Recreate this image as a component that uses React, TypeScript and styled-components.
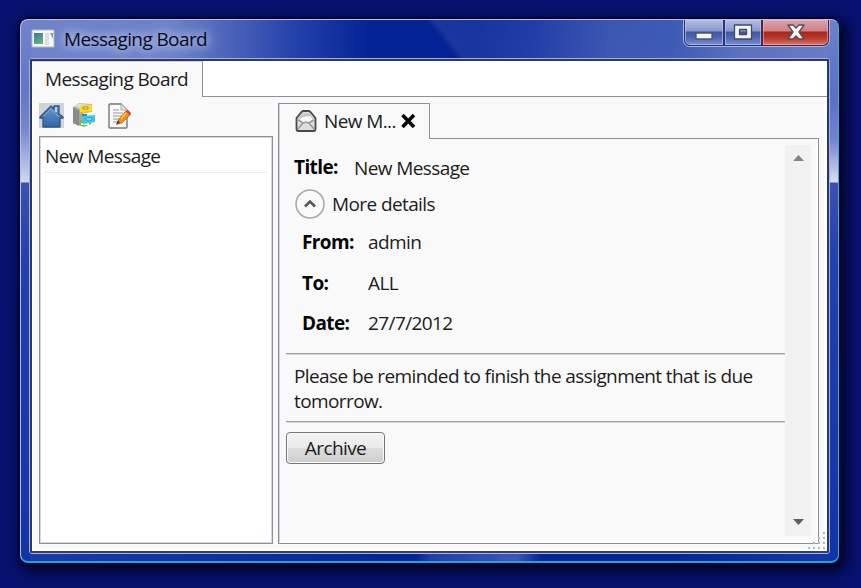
import React from "react";
import styled, { createGlobalStyle } from "styled-components";

const GlobalStyle = createGlobalStyle`
  * { box-sizing: border-box; }
  html, body { margin: 0; padding: 0; overflow: hidden; background: #08116f; }
`;

const Desktop = styled.main`
  width: 861px;
  height: 588px;
  padding: 19px 22px 25px 20px;
  overflow: hidden;
  background: #07106f;
  font-family: "Open Sans", "Noto Sans", sans-serif;
  font-size: 19px;
  color: #1c1c1c;
`;

const WindowFrame = styled.section`
  display: flex;
  flex-direction: column;
  width: 819px;
  height: 544px;
  padding: 0 8px 7px;
  border: 1px solid #b4c0df;
  border-right-color: #25b5e6;
  border-bottom: 2px solid #1ea4df;
  border-radius: 8px;
  box-shadow: 0 0 2px 1px #00001c, 4px 5px 14px 4px rgba(0, 0, 20, 0.8);
  background:
    linear-gradient(90deg, transparent 0, rgba(60, 85, 185, 0.5) 12%, rgba(80, 105, 195, 0.75) 80%, transparent 100%) 395px 100% / 125px 8px no-repeat,
    linear-gradient(180deg, #7185cd 0, #6177c5 70px, #7587cf 110px, #d0d8f1 162px, #3a51b0 163px, #2340ae 240px, #1233a8 100%) 0 0 / 9px 100% no-repeat,
    linear-gradient(180deg, #6d80c8 0, #5a70c3 80px, #7385ce 120px, #d7ddf3 162px, #3a51b0 163px, #2340ae 240px, #1233a8 100%) 100% 0 / 9px 100% no-repeat,
    linear-gradient(52deg, transparent 0, transparent 343px, rgba(255, 255, 255, 0.09) 350px, transparent 600px) 0 0 / 100% 39px no-repeat,
    linear-gradient(90deg, #6f83ca 0, #6d81c8 150px, #4a62b8 210px, #213faa 280px, #032394 350px, #032394 455px, #1230a0 510px, #3450ae 590px, #3856b5 650px, #5b70bf 720px, #6a7dc7 100%) 0 0 / 100% 39px no-repeat,
    linear-gradient(90deg, #1c3aae, #05249a 45%, #05249a 80%, #1736aa);
`;

const TitleBar = styled.header`
  display: flex;
  justify-content: space-between;
  height: 38px;
  flex: none;
`;

const TitleGroup = styled.div`
  display: flex;
  align-items: center;
  gap: 9px;
  padding: 0 0 1px 2px;
`;

const Label = styled.span<{ $spacing?: number; $bold?: boolean }>`
  display: inline-block;
  white-space: nowrap;
  line-height: 26px;
  font-weight: ${(p) => (p.$bold ? 700 : 400)};
  color: ${(p) => (p.$bold ? "#050505" : "inherit")};
  letter-spacing: ${(p) => p.$spacing ?? -0.6}px;
`;

const TitleLabel = styled(Label)`
  color: #080a18;
  text-shadow: 0 0 8px #b9c5ea, 0 0 12px #b4c1e8, 0 0 18px #a4b2e0;
`;

const Controls = styled.div`
  display: flex;
  width: 147px;
  height: 27px;
  border: 1px solid #a8b5e0;
  border-top: 0;
  border-radius: 0 0 7px 7px;
`;

const Control = styled.button<{ $width: number; $close?: boolean }>`
  display: flex;
  align-items: center;
  justify-content: center;
  width: ${(p) => p.$width}px;
  height: 26px;
  padding: 0 0 2px;
  border: 1px solid ${(p) => (p.$close ? "#5b1d34" : "#28356f")};
  border-top: 0;
  border-radius: ${(p) => (p.$close ? "0 0 6px 0" : "0")};
  box-shadow: inset 0 0 0 1px ${(p) => (p.$close ? "rgba(255,190,180,.55)" : "rgba(190,202,240,.65)")};
  background: ${(p) =>
    p.$close
      ? "linear-gradient(#d8a2ad 0, #cb8288 11px, #ac241c 12px, #b9372b 18px, #d4776c 100%)"
      : "linear-gradient(#b3bfe2 0, #8797cc 11px, #3f559f 12px, #5268b4 18px, #7b8fd0 100%)"};
  &:first-child { border-bottom-left-radius: 6px; }
  & + & { border-left-width: ${(p) => (p.$close ? 1 : 0)}px; }
`;

const ClientFrame = styled.div`
  display: flex;
  width: 801px;
  height: 496px;
  flex: none;
  border: 1px solid #a4b2df;
  border-radius: 3px;
`;

const Client = styled.div`
  display: flex;
  flex-direction: column;
  flex: 1;
  min-width: 0;
  border: 2px solid #2b3968;
  border-bottom-color: #36415f;
  border-radius: 2px;
  background: #fff;
`;

const OuterTabs = styled.nav`
  display: flex;
  height: 36px;
  flex: none;
`;

const OuterTab = styled.div`
  width: 171px;
  height: 36px;
  padding: 4px 0 0 13px;
  border-right: 1px solid #8c8e98;
  border-top: 1px solid #d0d0d5;
  background: #f9f9f9;
`;

const TabRule = styled.div`
  flex: 1;
  border-bottom: 1px solid #8c8e98;
`;

const Workspace = styled.div`
  display: flex;
  flex: 1;
  min-height: 0;
  gap: 5px;
  padding: 6px 6px 5px 5px;
  border: 2px solid #fff;
  border-top: 0;
  background: #f9f9f9;
  box-shadow: inset -1px 0 0 #fff;
`;

const Sidebar = styled.aside`
  display: flex;
  flex: none;
  flex-direction: column;
  width: 234px;
`;

const Toolbar = styled.div`
  display: flex;
  gap: 8px;
  height: 33px;
  & > :last-child { margin-left: 2px; }
`;

const MessageList = styled.div`
  flex: 1;
  padding: 6px 5px;
  border: 1px solid #8c909a;
  box-shadow: inset 0 0 0 1px #d3d5da;
  background: #fff;
`;

const MessageRow = styled.div`
  height: 30px;
  border-bottom: 1px solid #ededed;
`;

const Reader = styled.section`
  display: flex;
  flex: none;
  flex-direction: column;
  width: 541px;
`;

const ReaderTabs = styled.div`
  display: flex;
  height: 36px;
  flex: none;
`;

const ReaderTab = styled.div`
  display: flex;
  align-items: flex-start;
  width: 152px;
  padding: 4px 0 0 16px;
  border: 1px solid #8c8e98;
  border-bottom: 0;
  box-shadow: inset 1px 0 0 #d0d1d6;
  & > svg { flex: none; }
`;

const TabName = styled(Label)`
  width: 84px;
  padding-left: 7px;
`;

const ReaderPane = styled.div`
  display: flex;
  flex: 1;
  min-height: 0;
  padding: 6px 7px 7px;
  border: 1px solid #8c8e98;
  border-top: 0;
  box-shadow: inset -2px -1px 0 #fff, inset 1px 0 0 #d0d1d6;
`;

const Article = styled.article`
  flex: none;
  width: 499px;
`;

const TitleRow = styled.div`
  display: flex;
  height: 44px;
  padding: 10px 0 0 8px;
  & > :first-child { width: 60px; margin-top: -1px; }
`;

const Expander = styled.div`
  display: flex;
  align-items: center;
  gap: 7px;
  height: 30px;
  padding-left: 9px;
`;

const Details = styled.dl`
  display: grid;
  grid-template-columns: 66px 1fr;
  grid-auto-rows: 40.5px;
  height: 134px;
  margin: 0;
  padding: 10px 0 0 16px;
  & dt, & dd { margin: 0; }
`;

const Body = styled.p`
  height: 69px;
  margin: 0;
  padding: 10px 0 0 8px;
  border: solid #a0a0a0;
  border-width: 1px 0;
  box-shadow: 0 1px 0 #d6d6d6, inset 0 1px 0 #d6d6d6;
`;

const BodyLine = styled(Label)`
  display: block;
  line-height: 25px;
`;

const ArchiveButton = styled.button`
  width: 99px;
  height: 32px;
  margin-top: 10px;
  padding: 0;
  border: 1.5px solid #777;
  border-radius: 4px;
  box-shadow: inset 0 0 0 1px #fafafa;
  background: linear-gradient(#f2f2f2 0, #ebebeb 48%, #dcdcdc 52%, #cecece 100%);
  color: #1c1c1c;
  font: inherit;
`;

const Scrollbar = styled.div`
  display: flex;
  flex: none;
  flex-direction: column;
  align-items: center;
  justify-content: space-between;
  width: 26px;
  padding: 10px 0 11px;
  background: #f2f2f2;
`;

const Grip = styled.svg`
  position: absolute;
  left: 806px;
  top: 530px;
`;

const AppIcon = () => (
  <svg width="24" height="20" viewBox="0 0 24 20">
    <defs>
      <linearGradient id="app" x2="0.5" y2="1">
        <stop stopColor="#426fa7" />
        <stop offset="1" stopColor="#63b47c" />
      </linearGradient>
    </defs>
    <path d="M1 1h22v17H1z" fill="#f7f7f7" stroke="#b7b9bb" />
    <path d="M3 4h9v11H3z" fill="url(#app)" />
    <path d="M14 4h4v12h-4z" fill="#dddfe0" />
    <path d="M19 4h3v6z" fill="#70a79a" />
  </svg>
);

const HomeIcon = () => (
  <svg width="25" height="25" viewBox="0 0 25 25">
    <defs>
      <linearGradient id="home" x2="0" y2="1">
        <stop stopColor="#6a97c9" />
        <stop offset="1" stopColor="#2e66aa" />
      </linearGradient>
    </defs>
    <path d="M0 0h25v25H0z" fill="#d3d3d3" />
    <path d="M1 14 12 3l3 3V3h5v8l4 3v1h-3v9H4v-9H1z" fill="url(#home)" stroke="#2b5488" strokeWidth="1.3" strokeLinejoin="round" />
    <path d="M17 4v5" stroke="#d7e1ed" strokeWidth="1.5" />
    <path d="m5 13 7-7 8 8" fill="none" stroke="#85acd6" strokeWidth="0.8" />
  </svg>
);

const CabinetIcon = () => (
  <svg width="25" height="25" viewBox="0 0 25 25">
    <path d="m1 4 6-4 13 1v4L9 6v17l-8-3z" fill="#bdbdbd" />
    <path d="m1 4 6 3v16l-6-3z" fill="#8b8b8b" />
    <path d="m2 3 5-2 12 1-11 3z" fill="#e2e2e2" />
    <path d="M7 7h4v14H7z" fill="#a5a5a5" />
    <path d="m8 17 11 1v3l-7 3-5-2z" fill="#72c33b" />
    <path d="M9 20h8v2H9z" fill="#edf9e4" />
    <path d="m8 3 12-1v7L8 11z" fill="#edb715" />
    <path d="m8 3 12-1v6L8 9z" fill="#ffdc20" />
    <path d="M11 4h5v2h-5z" fill="#fff0a0" stroke="#a77405" strokeWidth="0.8" />
    <path d="M10 11h5v2h-5z" fill="#218ca9" />
    <path d="m11 13 12-1v7l-12 2z" fill="#38c7ee" />
    <path d="M14 15h6v2h-6z" fill="#c4f3fc" stroke="#1594be" strokeWidth="0.8" />
  </svg>
);

const EditIcon = () => (
  <svg width="25" height="26" viewBox="0 0 25 26">
    <path d="M3 1h11l6 6v17q0 1-1 1H3q-1 0-1-1V2q0-1 1-1z" fill="#fafafa" stroke="#777" strokeWidth="1.4" />
    <path d="M14 1v6h6" fill="#e7e7e7" stroke="#a6a6a6" />
    <path d="M6 7h6M6 10h10M6 13h9M6 16h6M6 19h9" stroke="#929292" strokeWidth="1.2" />
    <path d="m19 8 4 4-8 8-5 1 2-5z" fill="#f68f15" stroke="#bd6213" strokeWidth="0.8" />
    <path d="m19 8 2-1 3 3-1 3z" fill="#dd4720" />
    <path d="m11 17 2 3-4 2z" fill="#5b3b25" />
    <path d="m14 16 5-6" stroke="#ffd25e" strokeWidth="1.3" />
  </svg>
);

const EnvelopeIcon = () => (
  <svg width="22" height="26" viewBox="0 0 22 26">
    <path d="m1.5 10 5-6q1-1 2-1h5q1 0 2 1l5 6v11q0 2-2 2h-15q-2 0-2-2z" fill="#dededb" stroke="#484848" strokeWidth="1.8" strokeLinejoin="round" />
    <path d="m3.5 11 4-5h7l4 5-5 4h-5z" fill="#f7f7f7" stroke="#b5b5b5" />
    <path d="m3 12 5 3q3-2 6 0l5-3M3 21l5-6M19 21l-5-6" fill="none" stroke="#909090" strokeWidth="1.2" />
    <path d="m5 10 3-2 7-1" fill="none" stroke="#bbb" strokeWidth="1.4" />
  </svg>
);

const CloseTabIcon = () => (
  <svg width="15" height="26" viewBox="0 0 15 26">
    <path d="m1.5 7 11.5 12m0-12L1.5 19" stroke="#050505" strokeWidth="3.5" />
  </svg>
);

const ExpanderIcon = () => (
  <svg width="30" height="30" viewBox="0 0 30 30">
    <circle cx="15" cy="15" r="14" fill="#fafafa" stroke="#a8a8a8" strokeWidth="1.5" />
    <path d="m10 17.5 5-5 5 5" fill="none" stroke="#555" strokeWidth="2.6" />
  </svg>
);

const MinimizeIcon = () => (
  <svg width="20" height="20" viewBox="0 0 20 20">
    <path d="M2 11h16v6H2z" fill="#f3f3f3" stroke="#515566" strokeWidth="1.3" strokeLinejoin="round" />
  </svg>
);

const MaximizeIcon = () => (
  <svg width="20" height="20" viewBox="0 0 20 20">
    <path fillRule="evenodd" d="M1.5 3h17v14h-17zM6.5 7.5v5h7v-5z" fill="#f3f3f3" stroke="#454b62" strokeWidth="1.3" strokeLinejoin="round" />
  </svg>
);

const CloseIcon = () => (
  <svg width="20" height="20" viewBox="0 0 20 20">
    <path d="M2 3h5l3 3 3-3h5l-5 7 5 7h-5l-3-3-3 3H2l5-7z" fill="#f5f5f5" stroke="#5a4b55" strokeWidth="1.3" strokeLinejoin="round" />
  </svg>
);

const ScrollArrow = ({ down = false }: { down?: boolean }) => (
  <svg width="11" height="6" viewBox="0 0 11 6">
    <path d={down ? "M0 0h11L5.5 6z" : "M0 6h11L5.5 0z"} fill={down ? "#606060" : "#858585"} />
  </svg>
);

export default function App() {
  return (
    <>
      <GlobalStyle />
      <Desktop>
        <WindowFrame>
          <TitleBar>
            <TitleGroup>
              <AppIcon />
              <TitleLabel>Messaging Board</TitleLabel>
            </TitleGroup>
            <Controls>
              <Control $width={40} aria-label="Minimize"><MinimizeIcon /></Control>
              <Control $width={38} aria-label="Maximize"><MaximizeIcon /></Control>
              <Control $width={67} $close aria-label="Close"><CloseIcon /></Control>
            </Controls>
          </TitleBar>
          <ClientFrame>
            <Client>
              <OuterTabs>
                <OuterTab><Label>Messaging Board</Label></OuterTab>
                <TabRule />
              </OuterTabs>
              <Workspace>
                <Sidebar>
                  <Toolbar><HomeIcon /><CabinetIcon /><EditIcon /></Toolbar>
                  <MessageList>
                    <MessageRow><Label>New Message</Label></MessageRow>
                  </MessageList>
                </Sidebar>
                <Reader>
                  <ReaderTabs>
                    <ReaderTab>
                      <EnvelopeIcon />
                      <TabName>New M...</TabName>
                      <CloseTabIcon />
                    </ReaderTab>
                    <TabRule />
                  </ReaderTabs>
                  <ReaderPane>
                    <Article>
                      <TitleRow><Label $bold>Title:</Label><Label>New Message</Label></TitleRow>
                      <Expander><ExpanderIcon /><Label>More details</Label></Expander>
                      <Details>
                        <dt><Label $bold>From:</Label></dt><dd><Label>admin</Label></dd>
                        <dt><Label $bold>To:</Label></dt><dd><Label>ALL</Label></dd>
                        <dt><Label $bold>Date:</Label></dt><dd><Label>27/7/2012</Label></dd>
                      </Details>
                      <Body>
                        <BodyLine>Please be reminded to finish the assignment that is due</BodyLine>
                        <BodyLine>tomorrow.</BodyLine>
                      </Body>
                      <ArchiveButton><Label>Archive</Label></ArchiveButton>
                    </Article>
                    <Scrollbar><ScrollArrow /><ScrollArrow down /></Scrollbar>
                  </ReaderPane>
                </Reader>
              </Workspace>
            </Client>
          </ClientFrame>
        </WindowFrame>
        <Grip width="20" height="20" viewBox="0 0 20 20">
          <path d="M17 2h2v2h-2zM17 7h2v2h-2zM12 7h2v2h-2zM17 12h2v2h-2zM12 12h2v2h-2zM7 12h2v2H7zM17 17h2v2h-2zM12 17h2v2h-2zM7 17h2v2H7zM2 17h2v2H2z" fill="#acb7cc" />
        </Grip>
      </Desktop>
    </>
  );
}
